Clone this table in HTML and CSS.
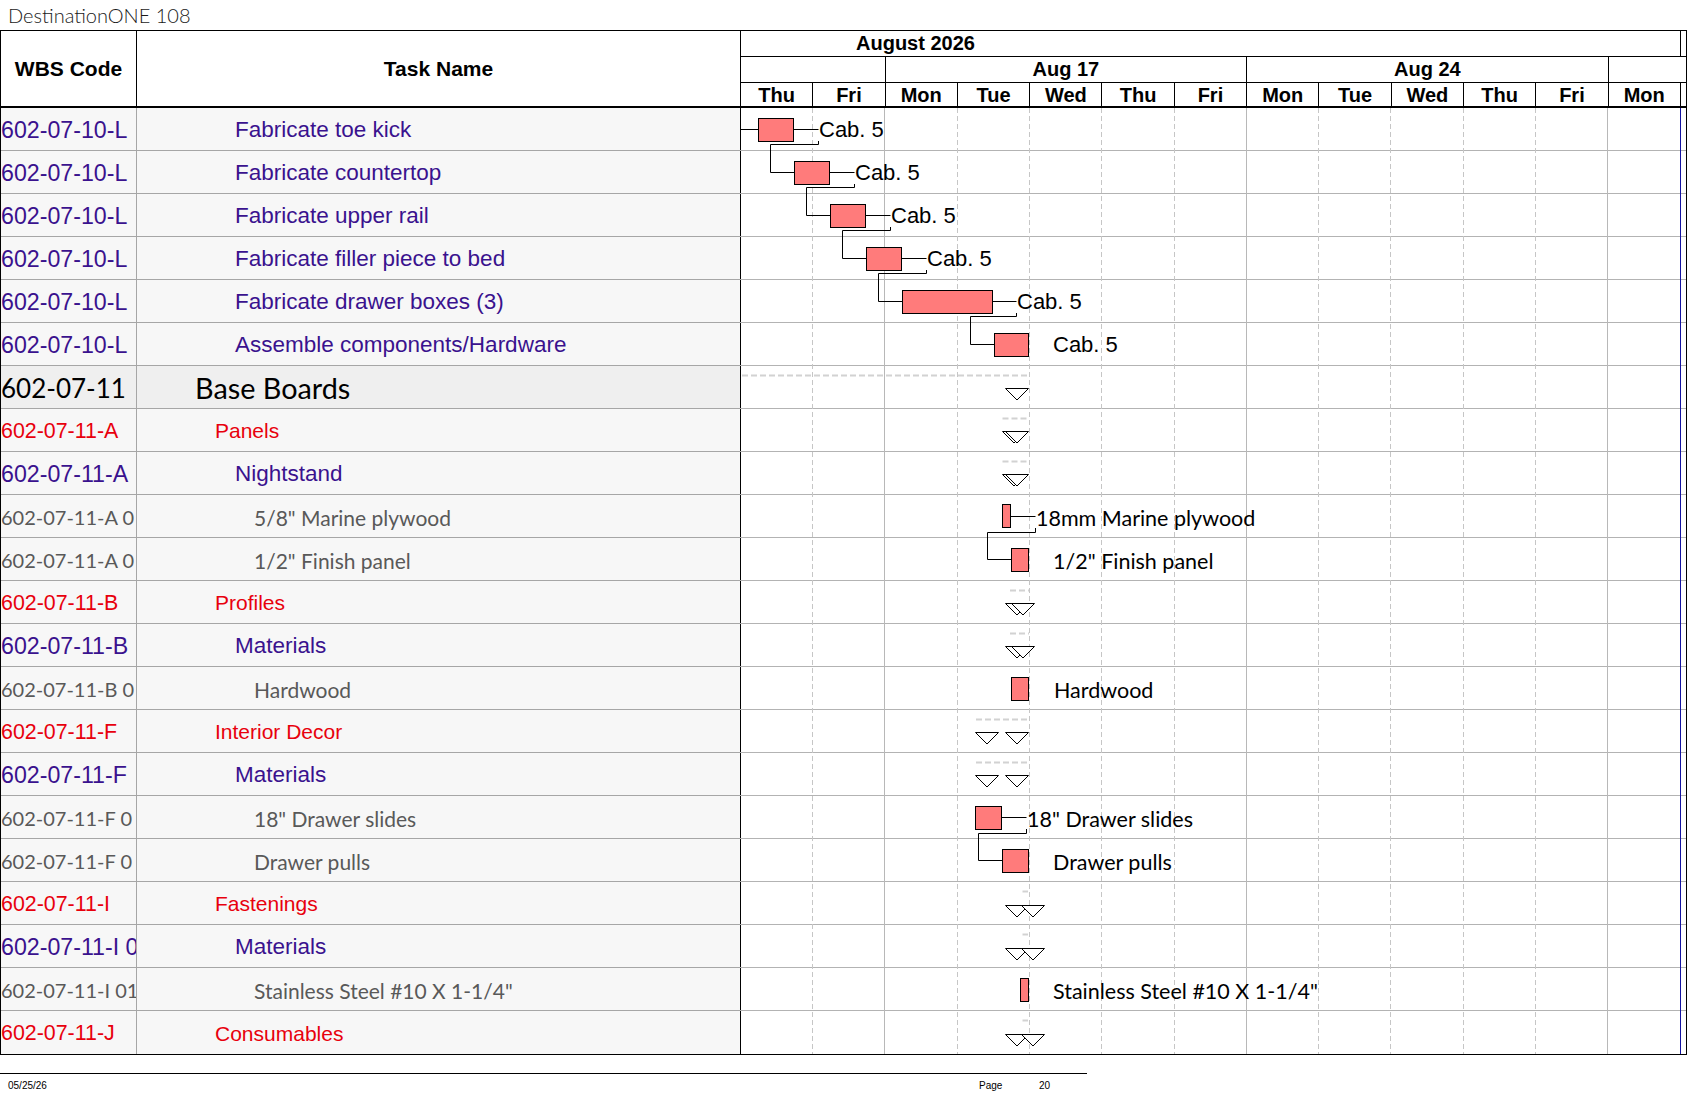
FILE: index.html
```html
<!DOCTYPE html>
<html lang="en">
<head>
<meta charset="utf-8">
<title>DestinationONE 108</title>
<link rel="stylesheet" href="styles.css">
</head>
<body>
<div class="page">
  <div class="title">DestinationONE 108</div>
  <div class="sheet">
    <div class="head">
      <div class="h-wbs">WBS Code</div>
      <div class="h-task">Task Name</div>
      <div class="h-chart">
        <div class="h-month"><div class="h-month-label">August 2026</div></div>
        <div class="h-weeks">
          <div class="wk span2"></div>
          <div class="wk span5">Aug 17</div>
          <div class="wk span5">Aug 24</div>
          <div class="wk span2 open"></div>
        </div>
        <div class="h-days">
          <div class="day">Thu</div><div class="day">Fri</div><div class="day">Mon</div><div class="day">Tue</div><div class="day">Wed</div><div class="day">Thu</div><div class="day">Fri</div><div class="day">Mon</div><div class="day">Tue</div><div class="day">Wed</div><div class="day">Thu</div><div class="day">Fri</div><div class="day">Mon</div><div class="day-end"></div>
        </div>
      </div>
    </div>
    <div class="body">
      <div class="tbl">
        <div class="row l3"><div class="wbs">602-07-10-L</div><div class="task">Fabricate toe kick</div></div>
        <div class="row l3"><div class="wbs">602-07-10-L</div><div class="task">Fabricate countertop</div></div>
        <div class="row l3"><div class="wbs">602-07-10-L</div><div class="task">Fabricate upper rail</div></div>
        <div class="row l3"><div class="wbs">602-07-10-L</div><div class="task">Fabricate filler piece to bed</div></div>
        <div class="row l3"><div class="wbs">602-07-10-L</div><div class="task">Fabricate drawer boxes (3)</div></div>
        <div class="row l3"><div class="wbs">602-07-10-L</div><div class="task">Assemble components/Hardware</div></div>
        <div class="row l1"><div class="wbs">602-07-11</div><div class="task">Base Boards</div></div>
        <div class="row l2"><div class="wbs">602-07-11-A</div><div class="task">Panels</div></div>
        <div class="row l3"><div class="wbs">602-07-11-A</div><div class="task">Nightstand</div></div>
        <div class="row l4"><div class="wbs">602-07-11-A 0</div><div class="task">5/8" Marine plywood</div></div>
        <div class="row l4"><div class="wbs">602-07-11-A 0</div><div class="task">1/2" Finish panel</div></div>
        <div class="row l2"><div class="wbs">602-07-11-B</div><div class="task">Profiles</div></div>
        <div class="row l3"><div class="wbs">602-07-11-B</div><div class="task">Materials</div></div>
        <div class="row l4"><div class="wbs">602-07-11-B 0</div><div class="task">Hardwood</div></div>
        <div class="row l2"><div class="wbs">602-07-11-F</div><div class="task">Interior Decor</div></div>
        <div class="row l3"><div class="wbs">602-07-11-F</div><div class="task">Materials</div></div>
        <div class="row l4"><div class="wbs">602-07-11-F 0</div><div class="task">18" Drawer slides</div></div>
        <div class="row l4"><div class="wbs">602-07-11-F 0</div><div class="task">Drawer pulls</div></div>
        <div class="row l2"><div class="wbs">602-07-11-I</div><div class="task">Fastenings</div></div>
        <div class="row l3"><div class="wbs">602-07-11-I 0</div><div class="task">Materials</div></div>
        <div class="row l4"><div class="wbs">602-07-11-I 01</div><div class="task">Stainless Steel #10 X 1-1/4"</div></div>
        <div class="row l2"><div class="wbs">602-07-11-J</div><div class="task">Consumables</div></div>
      </div>
      <div class="chart">
        <div class="crow"></div><div class="crow"></div><div class="crow"></div><div class="crow"></div>
        <div class="crow"></div><div class="crow"></div><div class="crow"></div><div class="crow"></div>
        <div class="crow"></div><div class="crow"></div><div class="crow"></div><div class="crow"></div>
        <div class="crow"></div><div class="crow"></div><div class="crow"></div><div class="crow"></div>
        <div class="crow"></div><div class="crow"></div><div class="crow"></div><div class="crow"></div>
        <div class="crow"></div><div class="crow"></div>

        <svg class="canvas" width="945" height="946" viewBox="0 0 945 946">
          <g class="grid-dash">
            <line x1="71.5" y1="0" x2="71.5" y2="946"/>
            <line x1="216.5" y1="0" x2="216.5" y2="946"/>
            <line x1="288.5" y1="0" x2="288.5" y2="946"/>
            <line x1="360.5" y1="0" x2="360.5" y2="946"/>
            <line x1="433.5" y1="0" x2="433.5" y2="946"/>
            <line x1="577.5" y1="0" x2="577.5" y2="946"/>
            <line x1="649.5" y1="0" x2="649.5" y2="946"/>
            <line x1="722.5" y1="0" x2="722.5" y2="946"/>
            <line x1="794.5" y1="0" x2="794.5" y2="946"/>
          </g>
          <g class="grid-week">
            <line x1="143.5" y1="0" x2="143.5" y2="946"/>
            <line x1="505.5" y1="0" x2="505.5" y2="946"/>
            <line x1="866.5" y1="0" x2="866.5" y2="946"/>
          </g>
          <line class="grid-end" x1="939.5" y1="0" x2="939.5" y2="946"/>

          <g class="rollup">
            <line x1="1" y1="267.5" x2="288" y2="267.5"/>
            <line x1="261.5" y1="310.5" x2="288" y2="310.5"/>
            <line x1="261.5" y1="353.5" x2="288" y2="353.5"/>
            <line x1="269" y1="482.5" x2="288" y2="482.5"/>
            <line x1="269" y1="525.5" x2="288" y2="525.5"/>
            <line x1="235" y1="611.5" x2="288" y2="611.5"/>
            <line x1="235" y1="654.5" x2="288" y2="654.5"/>
            <line x1="281.5" y1="783.5" x2="287" y2="783.5"/>
            <line x1="281.5" y1="826.5" x2="287" y2="826.5"/>
            <line x1="281.5" y1="912.5" x2="287" y2="912.5"/>
          </g>

          <g class="link">
            <path d="M0,21.5 H17.5"/>
            <path d="M52.5,21.5 H77.5"/>
            <path d="M77.5,33 V36.5 H29.5 V64.5 H53.5"/>
            <path d="M88.5,64.5 H113.5"/>
            <path d="M113.5,76 V79.5 H65.5 V107.5 H89.5"/>
            <path d="M124.5,107.5 H149.5"/>
            <path d="M149.5,119 V122.5 H101.5 V150.5 H125.5"/>
            <path d="M160.5,150.5 H185.5"/>
            <path d="M185.5,162 V165.5 H137.5 V193.5 H161.5"/>
            <path d="M251.5,193.5 H275.5"/>
            <path d="M275.5,205 V208.5 H229.5 V236.5 H253.5"/>
            <path d="M269.5,408.5 H294.5"/>
            <path d="M294.5,420 V424.5 H246.5 V451.5 H270.5"/>
            <path d="M260.5,709.5 H285.5"/>
            <path d="M285.5,721 V725.5 H237.5 V752.5 H261.5"/>
          </g>

          <g class="bar">
            <rect x="17.5" y="10.5" width="35" height="23"/>
            <rect x="53.5" y="53.5" width="35" height="23"/>
            <rect x="89.5" y="96.5" width="35" height="23"/>
            <rect x="125.5" y="139.5" width="35" height="23"/>
            <rect x="161.5" y="182.5" width="90" height="23"/>
            <rect x="253.5" y="225.5" width="34" height="23"/>
            <rect x="261.5" y="396.5" width="8" height="23"/>
            <rect x="270.5" y="440.5" width="17" height="23"/>
            <rect x="270.5" y="569.5" width="17" height="23"/>
            <rect x="234.5" y="698.5" width="26" height="23"/>
            <rect x="261.5" y="741.5" width="26" height="23"/>
            <rect x="279.5" y="870.5" width="8" height="23"/>
          </g>

          <g class="tri">
            <path d="M264.5,280.5 h23 l-11.5,11.5 z"/>
            <path d="M261.5,323.5 h23 l-11.5,11.5 z"/>
            <path d="M264.5,323.5 h23 l-11.5,11.5 z"/>
            <path d="M261.5,366.5 h23 l-11.5,11.5 z"/>
            <path d="M264.5,366.5 h23 l-11.5,11.5 z"/>
            <path d="M264.5,495.5 h23 l-11.5,11.5 z"/>
            <path d="M270.5,495.5 h23 l-11.5,11.5 z"/>
            <path d="M264.5,538.5 h23 l-11.5,11.5 z"/>
            <path d="M270.5,538.5 h23 l-11.5,11.5 z"/>
            <path d="M234.5,624.5 h23 l-11.5,11.5 z"/>
            <path d="M264.5,624.5 h23 l-11.5,11.5 z"/>
            <path d="M234.5,667.5 h23 l-11.5,11.5 z"/>
            <path d="M264.5,667.5 h23 l-11.5,11.5 z"/>
            <path d="M264.5,797.5 h23 l-11.5,11.5 z"/>
            <path d="M280.5,797.5 h23 l-11.5,11.5 z"/>
            <path d="M264.5,840.5 h23 l-11.5,11.5 z"/>
            <path d="M280.5,840.5 h23 l-11.5,11.5 z"/>
            <path d="M264.5,926.5 h23 l-11.5,11.5 z"/>
            <path d="M280.5,926.5 h23 l-11.5,11.5 z"/>
          </g>
        </svg>

        <span class="lbl cab" style="left:78px;top:9px">Cab. 5</span>
        <span class="lbl cab" style="left:114px;top:52px">Cab. 5</span>
        <span class="lbl cab" style="left:150px;top:95px">Cab. 5</span>
        <span class="lbl cab" style="left:186px;top:138px">Cab. 5</span>
        <span class="lbl cab" style="left:276px;top:181px">Cab. 5</span>
        <span class="lbl cab" style="left:312px;top:224px">Cab. 5</span>
        <span class="lbl res" style="left:295px;top:396px">18mm Marine plywood</span>
        <span class="lbl res" style="left:312px;top:439px">1/2" Finish panel</span>
        <span class="lbl res" style="left:313px;top:568px">Hardwood</span>
        <span class="lbl res" style="left:286px;top:697px">18" Drawer slides</span>
        <span class="lbl res" style="left:312px;top:740px">Drawer pulls</span>
        <span class="lbl res" style="left:312px;top:869px">Stainless Steel #10 X 1-1/4"</span>
      </div>
    </div>
  </div>
  <div class="footer">
    <span class="f-date">05/25/26</span>
    <span class="f-page">Page</span>
    <span class="f-num">20</span>
  </div>
</div>
</body>
</html>
```

FILE: styles.css
```css
html, body {
  margin: 0;
  padding: 0;
  background: #ffffff;
}

body {
  font-family: "Liberation Sans", Arial, sans-serif;
  color: #000;
}

.page {
  width: 1687px;
}

.title {
  height: 30px;
  padding-left: 8px;
  font-family: Lato, "Open Sans", sans-serif;
  font-weight: 300;
  font-size: 20px;
  line-height: 30px;
  color: #1a1a1a;
}

.sheet {
  width: 1687px;
  box-sizing: border-box;
  border-top: 1px solid #000;
  border-left: 1px solid #000;
  border-right: 1px solid #000;
}

/* ---------- header ---------- */
.head {
  display: flex;
  height: 75px;
  border-bottom: 2px solid #000;
}

.h-wbs,
.h-task {
  display: flex;
  align-items: center;
  justify-content: center;
  font-weight: bold;
  font-size: 21px;
  border-right: 1px solid #000;
}

.h-wbs {
  width: 136px;
  box-sizing: border-box;
}

.h-task {
  width: 604px;
  box-sizing: border-box;
}

.h-chart {
  width: 945px;
  display: flex;
  flex-direction: column;
  font-weight: bold;
  font-size: 20px;
}

.h-month {
  height: 26px;
  box-sizing: border-box;
  border-bottom: 1px solid #000;
  display: flex;
}

.h-month-label {
  width: 940px;
  box-sizing: border-box;
  border-right: 1px solid #000;
  padding-left: 115px;
  line-height: 24px;
}

.h-weeks,
.h-days {
  display: grid;
  grid-template-columns: repeat(13, 72.3077px) 1fr;
}

.h-weeks {
  height: 26px;
  box-sizing: border-box;
  border-bottom: 1px solid #000;
}

.wk {
  box-sizing: border-box;
  border-right: 1px solid #000;
  text-align: center;
  line-height: 25px;
}

.wk.span2 { grid-column: span 2; }
.wk.span5 { grid-column: span 5; }
.wk.open { border-right: none; }

.h-days {
  height: 23px;
}

.day {
  box-sizing: border-box;
  border-right: 1px solid #000;
  text-align: center;
  line-height: 24px;
}

/* ---------- body ---------- */
.body {
  display: flex;
  border-bottom: 1px solid #000;
}

.tbl {
  width: 740px;
}

.row {
  display: flex;
  height: 43px;
  box-sizing: border-box;
  border-bottom: 1px solid #a6a6a6;
  background: #f7f7f7;
}

.row:last-child {
  border-bottom: none;
}

.wbs,
.task {
  display: flex;
  align-items: center;
  white-space: nowrap;
  overflow: hidden;
  box-sizing: border-box;
  padding-top: 2px;
}

.wbs {
  width: 136px;
  border-right: 1px solid #a6a6a6;
}

.task {
  width: 604px;
  border-right: 1px solid #000;
}

.l1 {
  background: #efefef;
  color: #000;
  font-family: Lato, "Open Sans", sans-serif;
}
.l1 .wbs { font-size: 26px; }
.l1 .task { font-size: 28.8px; padding-left: 58px; }

.l2 {
  color: #e8000d;
  font-size: 21px;
}
.l2 .wbs { font-size: 21.4px; }
.l2 .task { padding-left: 78px; }

.l3 {
  color: #3a128e;
  font-size: 22.5px;
}
.l3 .wbs { font-size: 23.2px; }
.l3 .task { padding-left: 98px; }

.l4 {
  color: #595959;
  font-family: Lato, "Open Sans", sans-serif;
  font-size: 21px;
}
.l4 .wbs { font-size: 20px; }
.l4 .task { padding-left: 117px; }

/* ---------- chart ---------- */
.chart {
  position: relative;
  width: 945px;
  background: #fff;
}

.crow {
  height: 43px;
  box-sizing: border-box;
  border-bottom: 1px solid #b3b3b3;
}

.crow:nth-child(22) {
  border-bottom: none;
}

.canvas {
  position: absolute;
  left: 0;
  top: 0;
  overflow: visible;
}

.grid-dash line {
  stroke: #c6c6c6;
  stroke-width: 1;
  stroke-dasharray: 5 3;
}

.grid-week line {
  stroke: #b8b8b8;
  stroke-width: 1;
}

.grid-end {
  stroke: #1212a0;
  stroke-width: 1;
}

.rollup line {
  stroke: #d2d2d2;
  stroke-width: 2;
  stroke-dasharray: 6 3;
}

.link path {
  fill: none;
  stroke: #000;
  stroke-width: 1;
}

.bar rect {
  fill: #ff7b7b;
  stroke: #000;
  stroke-width: 1;
}

.tri path {
  fill: #fff;
  stroke: #000;
  stroke-width: 1;
}

.lbl {
  position: absolute;
  white-space: nowrap;
  line-height: 25px;
  color: #000;
}

.cab {
  font-family: "Liberation Sans", Arial, sans-serif;
  font-size: 22px;
}

.res {
  font-family: Lato, "Open Sans", sans-serif;
  font-size: 21.5px;
  margin-top: 2px;
}

/* ---------- footer ---------- */
.footer {
  width: 1087px;
  margin-top: 18px;
  border-top: 1px solid #000;
  display: flex;
  align-items: center;
  height: 23px;
  font-family: "Liberation Sans Narrow", "Liberation Sans", Arial, sans-serif;
  font-size: 10px;
  color: #000;
}

.f-date {
  padding-left: 8px;
}

.f-page {
  margin-left: auto;
  width: 60px;
}

.f-num {
  width: 48px;
}
```
